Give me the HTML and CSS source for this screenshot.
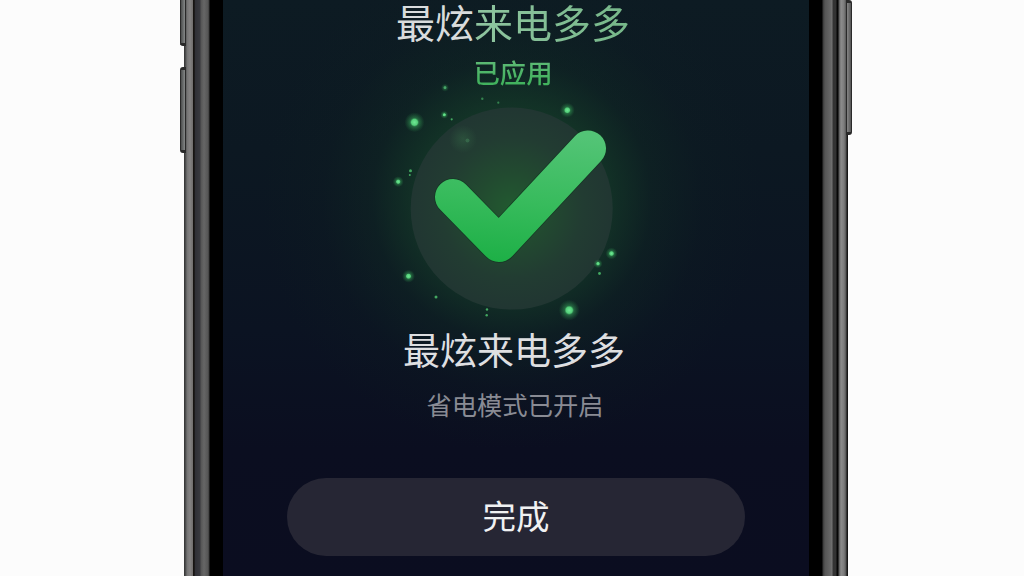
FILE: index.html
```html
<!DOCTYPE html>
<html lang="zh-CN">
<head>
  <meta charset="UTF-8" />
  <title>最炫来电多多</title>
  <link rel="stylesheet" href="styles.css">
</head>
<body>
  <div class="phone">
    <div class="side side-left">
      <span class="key key-up"></span>
      <span class="key key-down"></span>
    </div>

    <main class="screen">
      <h1 class="title">最炫<span>来电多多</span></h1>
      <p class="status">已应用</p>

      <svg class="success" viewBox="380 100 264 220" aria-hidden="true">
        <defs>
          <linearGradient id="tick" gradientUnits="userSpaceOnUse" x1="530" y1="130" x2="515" y2="262">
            <stop offset="0" stop-color="#53c476" />
            <stop offset="0.55" stop-color="#37bb5c" />
            <stop offset="1" stop-color="#1eb047" />
          </linearGradient>
          <radialGradient id="disc" gradientUnits="userSpaceOnUse" cx="512" cy="208" r="101">
            <stop offset="0" stop-color="#225a30" />
            <stop offset="0.35" stop-color="#224a30" />
            <stop offset="0.7" stop-color="#223c32" />
            <stop offset="1" stop-color="#213632" />
          </radialGradient>
          <radialGradient id="spark">
            <stop offset="0" stop-color="#6fe895" />
            <stop offset="0.3" stop-color="#54cf79" />
            <stop offset="0.45" stop-color="#37a45a" stop-opacity="0.5" />
            <stop offset="1" stop-color="#2a8a48" stop-opacity="0" />
          </radialGradient>
          <radialGradient id="haze">
            <stop offset="0" stop-color="#39714a" stop-opacity="0.4" />
            <stop offset="1" stop-color="#39714a" stop-opacity="0" />
          </radialGradient>
        </defs>

        <circle cx="511.7" cy="208.6" r="101" fill="url(#disc)" />
        <circle cx="463" cy="139" r="14" fill="url(#haze)" />
        <circle cx="467.5" cy="140.5" r="2" fill="#43845a" opacity="0.5" />

        <!-- étincelles -->
        <g fill="url(#spark)">
          <circle cx="414.5" cy="122.3" r="10" />
          <circle cx="567.3" cy="110.2" r="7.5" />
          <circle cx="569.2" cy="310.2" r="10.5" />
          <circle cx="408.5" cy="276.2" r="6.5" />
          <circle cx="398.2" cy="181.7" r="5.5" />
          <circle cx="611.5" cy="253.5" r="6" />
          <circle cx="598" cy="263.7" r="4.5" />
          <circle cx="444.3" cy="114.8" r="4" />
          <circle cx="445" cy="87.7" r="4" opacity="0.7" />
        </g>
        <g fill="#43a861">
          <circle cx="410.5" cy="170.7" r="1.5" />
          <circle cx="409.8" cy="175" r="1" />
          <circle cx="436" cy="297" r="1.5" />
          <circle cx="599.5" cy="273.5" r="1.4" />
          <circle cx="487" cy="309.5" r="1.2" />
          <circle cx="486.7" cy="315.2" r="1.2" />
          <circle cx="451.7" cy="119.3" r="1.1" />
          <circle cx="482.3" cy="98.7" r="1.2" opacity="0.7" />
          <circle cx="498.3" cy="102.7" r="1.1" opacity="0.7" />
        </g>

        <path class="tick-edge" d="M453 197 L499 244 L588 148.5" />
        <path class="tick" d="M453 197 L499 244 L588 148.5" />
      </svg>

      <h2 class="name">最炫来电多多</h2>
      <p class="mode">省电模式已开启</p>
      <button class="done">完成</button>
    </main>

    <div class="side side-right">
      <span class="key key-power"></span>
    </div>
  </div>
</body>
</html>
```
FILE: styles.css
```css
body {
  margin: 0;
  height: 576px;
  overflow: hidden;
  background: #fcfcfc;
  font-family: "Noto Sans CJK SC", "Noto Sans", sans-serif;
}
.phone {
  display: flex;
  width: 664px;
  height: 576px;
  margin-left: 184px;
}
.side {
  position: relative;
  flex: none;
  width: 39px;
}
.side-left {
  background: linear-gradient(to right,
    #303030 0, #555 2px, #747474 3px, #858383 6px, #706d6c 9px,
    #171412 9.5px, #211f20 11px, #303036 11.5px, #39393e 16px,
    #555 17px, #666 20px, #555 24px, #3a3a3a 25px, #000 26px);
}
.side-right {
  background: linear-gradient(to right,
    #000 13px, #393939 14px, #555 16px, #696969 22px, #747474 23px,
    #333 24px, #333 27px, #060606 28px, #060606 29px, #555 30px,
    #8c8c8c 32px, #7c7c7c 35px, #555 37px, #171717 38px);
}
.key {
  position: absolute;
  box-sizing: border-box;
  width: 6px;
  border: solid #292929;
  background: linear-gradient(to right, #4b4d4d, #858888);
}
.key-up {
  left: -4px;
  top: 0;
  height: 46px;
  border-width: 0 1px 3px;
  border-radius: 0 0 0 3px;
}
.key-down {
  left: -4px;
  top: 67px;
  height: 86px;
  border-width: 3px 1px;
  border-radius: 3px 0 0 3px;
}
.key-power {
  right: -4px;
  top: 0;
  height: 135px;
  border-width: 3px 1px;
  border-radius: 0 3px 3px 0;
  background: linear-gradient(to right, #858585, #555);
}
.screen {
  flex: none;
  display: flex;
  flex-direction: column;
  align-items: center;
  width: 586px;
  background:
    radial-gradient(circle at 289px 200px, rgba(24, 74, 42, 0.85) 0, rgba(21, 60, 40, 0.72) 95px, rgba(17, 46, 36, 0.38) 140px, rgba(15, 36, 34, 0.15) 190px, rgba(14, 32, 34, 0) 250px),
    linear-gradient(#0d1b23 0, #0c1822 150px, #0b1322 330px, #0b0e20 450px, #0b0d20 100%);
}
.title {
  margin: 0 0 0 -6px;
  font-size: 39px;
  font-weight: 400;
  line-height: 42px;
  color: #d9dcdd;
}
.title span {
  background: linear-gradient(to right, #8fc5a0, #76b789);
  -webkit-background-clip: text;
  background-clip: text;
  color: transparent;
}
.status {
  margin: 15px 0 0 -6px;
  font-size: 26.4px;
  font-weight: 500;
  line-height: 30px;
  background: linear-gradient(#5cb974 15%, #42b25e 85%);
  -webkit-background-clip: text;
  background-clip: text;
  color: transparent;
}
.success {
  flex: none;
  width: 264px;
  height: 220px;
  margin: 13px 0 0 -8px;
  overflow: visible;
}
.tick,
.tick-edge {
  fill: none;
  stroke-linecap: round;
  stroke-linejoin: round;
}
.tick {
  stroke: url(#tick);
  stroke-width: 36;
}
.tick-edge {
  stroke: #103620;
  stroke-width: 37.5;
  opacity: 0.7;
}
.name {
  margin: 9px 0 0 -4px;
  font-size: 37px;
  font-weight: 400;
  line-height: 40px;
  color: #dedfe1;
}
.mode {
  margin: 20px 0 0 -2px;
  font-size: 25.3px;
  line-height: 30px;
  color: #898b94;
}
.done {
  flex: none;
  width: 458px;
  height: 78px;
  margin-top: 59px;
  padding: 0 0 4px;
  border: 0;
  border-radius: 39px;
  background: #262634;
  color: #f0f1f2;
  font-family: inherit;
  font-size: 33.5px;
  line-height: 40px;
}
```
